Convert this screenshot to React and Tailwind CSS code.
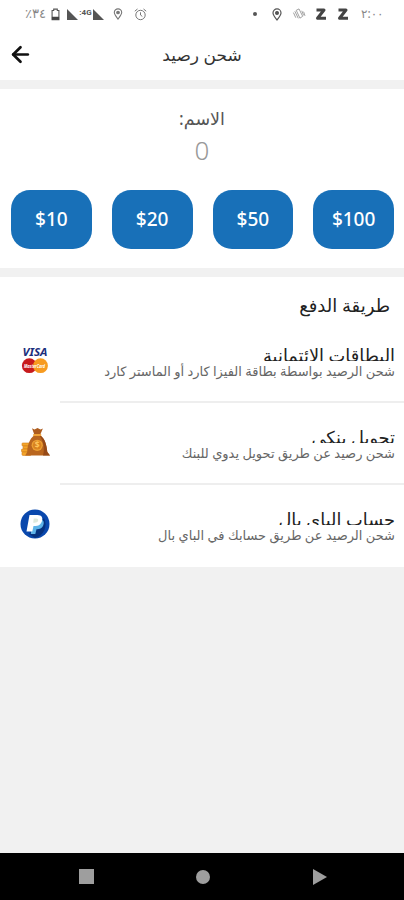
import { ArrowLeft } from "lucide-react";

const amounts = ["$10", "$20", "$50", "$100"];

const methods = [
    {
        title: "البطاقات الائتمانية",
        detail: "شحن الرصيد بواسطة بطاقة الفيزا كارد أو الماستر كارد",
        icon: CardsIcon,
    },
    {
        title: "تحويل بنكي",
        detail: "شحن رصيد عن طريق تحويل يدوي للبنك",
        icon: MoneyBagIcon,
    },
    {
        title: "حساب الباي بال",
        detail: "شحن الرصيد عن طريق حسابك في الباي بال",
        icon: PaypalIcon,
    },
];

function CardsIcon() {
    return (
        <svg viewBox="0 0 30 30" className="size-[30px]">
            <text x="2.5" y="11" fontSize="11" fontWeight="700" fontStyle="italic" fill="#1c2f7d" textLength="25" lengthAdjust="spacingAndGlyphs">VISA</text>
            <circle cx="9.3" cy="20.7" r="7.4" fill="#c71a1d" />
            <circle cx="20.5" cy="20.7" r="7.4" fill="#f79b20" />
            <text x="4" y="22.6" fontSize="5" fontWeight="700" fontStyle="italic" fill="#fff" textLength="21" lengthAdjust="spacingAndGlyphs">MasterCard</text>
        </svg>
    );
}

function MoneyBagIcon() {
    return (
        <svg viewBox="0 0 30 30" className="size-[30px]">
            <g fill="#f4a52b" stroke="#d27c1a" strokeWidth="0.6">
                <rect x="2" y="16" width="8" height="3" rx="0.8" />
                <rect x="3" y="19" width="8" height="3" rx="0.8" />
                <rect x="1.5" y="22" width="9" height="3" rx="0.8" />
                <rect x="2" y="25" width="9" height="3.4" rx="0.8" />
            </g>
            <path d="M12 1.2l2.5 1.2 3-1.3 3 1.3 2.4-1-2.6 6h-6z" fill="#ad5c1e" />
            <path d="M14 8.5h6.5c4.5 3.5 6 9 6.8 16.5L30 28.6H5.2l2-3.6C7.5 18 9.5 12 14 8.5z" fill="#b9661f" />
            <path d="M19.5 8.5h1c4.5 3.5 6 9 6.8 16.5L30 28.6h-7C25 22 23.5 14 19.5 8.5z" fill="#964a18" />
            <rect x="13" y="7" width="8.4" height="2" rx="1" fill="#f0a338" />
            <circle cx="17.2" cy="18.3" r="5.6" fill="#eda033" />
            <circle cx="17.2" cy="18.3" r="4.3" fill="#d9821f" />
            <text x="17.2" y="21.3" fontSize="8.5" fontWeight="700" textAnchor="middle" fill="#ffc65c">$</text>
        </svg>
    );
}

function PaypalIcon() {
    return (
        <svg viewBox="0 0 30 30" className="size-[30px]">
            <circle cx="15" cy="15" r="14.5" fill="#0a48ad" />
            <path d="M9 25L24 9a14 14 0 0 1-9 20z" fill="#06327f" />
            <path d="M13 10h7c4 .5 4.5 4 3 7-1.4 2.8-4 3.4-6.5 3.2L15.3 25h-4.5z" fill="#5eb3e8" />
            <path d="M9.5 6h8c4.3 0 5.500 2.800 4.500 6-1.200 4-4 5.200-8.500 5L12.300 22.500H6.500z" fill="#fff" />
            <path d="M13.700 9.500h2.500c1.800 0 2.300 1 1.900 2.300-.5 1.700-1.800 2-4.900 1.900z" fill="#dfe9dc" />
        </svg>
    );
}

function BatteryIcon() {
    return (
        <svg viewBox="0 0 10 14" className="h-[13px] w-[9px]">
            <path d="M3 1h4v1.500h1.800v10.300H1.200V2.500H3z" fill="#fff" stroke="#555" strokeWidth="1.200" />
            <path d="M1 9.500h8V13H1z" fill="#444" />
        </svg>
    );
}

function SignalIcon() {
    return (
        <svg viewBox="0 0 11 11" className="h-[11px] w-[11px]">
            <path d="M0 0l11 11H0z" fill="#555" />
        </svg>
    );
}

function PinIcon({ className }) {
    return (
        <svg viewBox="0 0 10 13" className={className} fill="none" stroke="currentColor" strokeWidth="1.200">
            <path d="M5 12C2.500 8.700 1 6.800 1 4.900a4 4 0 0 1 8 0C9 6.800 7.500 8.700 5 12z" />
            <circle cx="5" cy="4.900" r="1.400" fill="currentColor" />
        </svg>
    );
}

function AlarmIcon() {
    return (
        <svg viewBox="0 0 13 13" className="size-[13px] text-[#777]" fill="none" stroke="currentColor">
            <circle cx="6.500" cy="7" r="4.700" />
            <path d="M6.500 4.300V7l1.800 1.400M.8 3.200L3.500 1M12.200 3.200L9.500 1" />
        </svg>
    );
}

function VibrateIcon() {
    return (
        <svg viewBox="0 0 14 13" className="h-3 w-3.5 text-[#999]" fill="none" stroke="currentColor">
            <path d="M4 2.500l3-1.500 4 8-3 2zM2.500 3.500l3.700 7.700M1 5l2.500 5.500M10 3l2 5M12 4l1.500 4.500" />
        </svg>
    );
}

function ZIcon() {
    return (
        <svg viewBox="0 0 12 14" className="h-3.5 w-3" fill="none" stroke="#444" strokeWidth="3" strokeLinejoin="round">
            <path d="M1.500 3h7.500L2.500 11.200H11" />
        </svg>
    );
}

function StatusBar() {
    return (
        <div dir="ltr" className="flex h-7 items-center bg-white text-[13px] text-[#888]">
            <bdo dir="ltr" className="ml-[25px] w-[26px]">٪٣٤</bdo>
            <BatteryIcon />
            <div className="ml-[7px] flex items-center">
                <SignalIcon />
                <span className="w-[15px] self-start text-center font-['Roboto'] text-[8px] leading-[7px] font-bold text-[#555]">:4G</span>
                <SignalIcon />
            </div>
            <PinIcon className="ml-[9px] h-3 w-[10px] text-[#777]" />
            <div className="ml-[11px]"><AlarmIcon /></div>
            <div className="ml-[106px] size-1 rounded-full bg-[#555]" />
            <PinIcon className="ml-[15px] h-[13px] w-[10px] text-[#555]" />
            <div className="ml-[10px]"><VibrateIcon /></div>
            <div className="ml-[9px] flex gap-[10px]">
                <ZIcon />
                <ZIcon />
            </div>
            <bdo dir="ltr" className="ml-[12px] text-[12px]">٢:٠٠</bdo>
        </div>
    );
}

function MethodRow({ method, last }) {
    const Icon = method.icon;

    return (
        <div className="flex h-[82px] flex-row-reverse">
            <div dir="ltr" className="w-[60px] pt-[24px] pl-5">
                <Icon />
            </div>
            <div className={`flex-1 pt-[23px] pr-[9px] whitespace-nowrap ${last ? "" : "border-b-2 border-[#eeeeee]"}`}>
                <h3 className="h-[17px] overflow-hidden text-[17.8px] leading-[23px] text-[#222]">{method.title}</h3>
                <p className="pt-px text-[13px] leading-[18px] text-[#666]">{method.detail}</p>
            </div>
        </div>
    );
}

function App() {
    return (
        <div dir="rtl" className="flex h-[900px] w-[404px] flex-col overflow-hidden bg-[#f1f1f1] font-['Noto_Sans','DejaVu_Sans',sans-serif]">
            <StatusBar />
            <header dir="ltr" className="flex h-[52px] items-center bg-white">
                <ArrowLeft className="mr-auto ml-[8px] size-[25px] text-[#111]" strokeWidth={2.6} />
                <h1 dir="rtl" className="mr-auto pt-px pr-[33px] text-[17px] text-[#333]">شحن رصيد</h1>
            </header>

            <section className="mt-[9px] h-[179px] bg-white pt-[17px] text-center">
                <p className="text-[17.5px] leading-6 text-[#555]">الاسم:</p>
                <p className="mt-1 text-[26px] leading-8 font-light text-[#999]">0</p>
                <div dir="ltr" className="mt-[24px] grid grid-cols-4 gap-[20px] pr-[10px] pl-[11px]">
                    {amounts.map((amount) => (
                        <button key={amount} className="h-[59px] rounded-[19px] bg-[#1870b8] text-[19px] font-medium text-white">
                            {amount}
                        </button>
                    ))}
                </div>
            </section>

            <section className="mt-[9px] h-[290px] bg-white">
                <h2 className="h-[44px] pt-[15px] pr-[14px] text-[18px] leading-[27px] text-[#222]">طريقة الدفع</h2>
                {methods.map((method, index) => (
                    <MethodRow key={method.title} method={method} last={index === methods.length - 1} />
                ))}
            </section>

            <nav dir="ltr" className="mt-auto flex h-[47px] items-center bg-black">
                <div className="ml-[79px] size-[15px] bg-[#9e9e9e]" />
                <div className="ml-[102px] size-[14px] rounded-full bg-[#9e9e9e]" />
                <svg viewBox="0 0 14 16" className="ml-[103px] h-4 w-3.5">
                    <path d="M0 0l14 8-14 8z" fill="#9e9e9e" />
                </svg>
            </nav>
        </div>
    );
}

export default App;
